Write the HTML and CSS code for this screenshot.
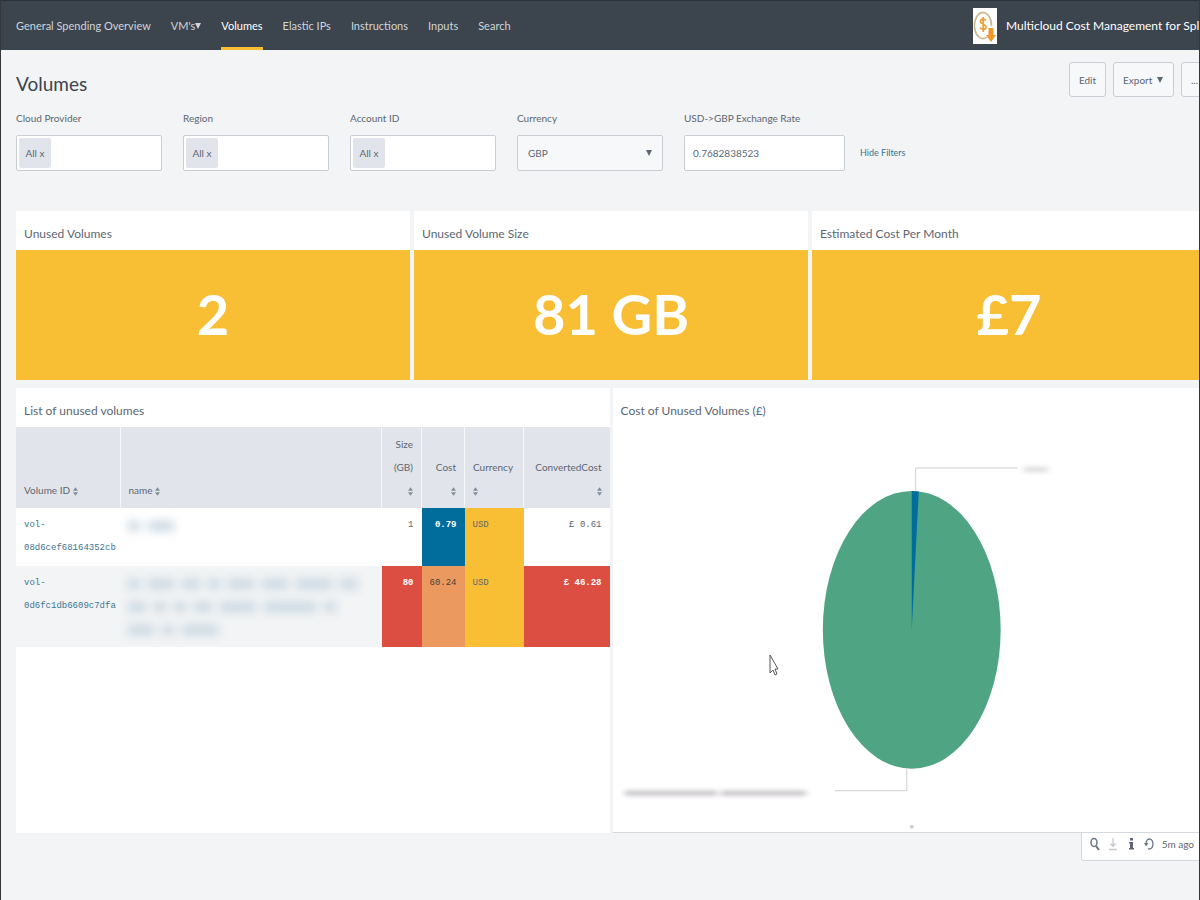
FILE: index.html
```html
<!DOCTYPE html>
<html lang="en">

<head>
    <meta charset="UTF-8">
    <meta name="viewport" content="width=device-width, initial-scale=1.0">
    <title>Volumes</title>
    <link rel="stylesheet" href="styles.css">
</head>

<body>
    <header class="app-bar">
        <nav class="app-nav">
            <a href="#">General Spending Overview</a>
            <a href="#">VM's<svg class="caret" viewBox="0 0 6 6"><path d="M0 0h6L3 6z"/></svg></a>
            <a href="#" class="active">Volumes</a>
            <a href="#">Elastic IPs</a>
            <a href="#">Instructions</a>
            <a href="#">Inputs</a>
            <a href="#">Search</a>
        </nav>
        <div class="app-brand">
            <svg class="app-logo" viewBox="0 0 24 36">
                <rect width="24" height="36" fill="#fff"/>
                <path d="M14 29A8.500 13 0 1 1 18.500 18" fill="none" stroke="#cdb48c" stroke-width="1.600"/>
                <path d="M13 12.500C12 10.500 7.500 10.500 7.500 13.500S13 16 13 19 8 22 7 19.500M10.200 9v15" fill="none" stroke="#eda13c" stroke-width="1.800"/>
                <path d="M15.500 20h5v7H23l-5 7-5-7h2.500z" fill="#f0982c"/>
            </svg>
            <span>Multicloud Cost Management for Splunk</span>
        </div>
    </header>

    <main>
        <div class="title-bar">
            <h1>Volumes</h1>
            <div class="actions">
                <button type="button">Edit</button>
                <button type="button">Export <svg class="caret" viewBox="0 0 6 6"><path d="M0 0h6L3 6z"/></svg></button>
                <button type="button">...</button>
            </div>
        </div>

        <form class="filters">
            <div class="field">
                <label for="provider">Cloud Provider</label>
                <div class="multi"><button type="button" class="tag">All x</button><input type="text" id="provider"></div>
            </div>
            <div class="field">
                <label for="region">Region</label>
                <div class="multi"><button type="button" class="tag">All x</button><input type="text" id="region"></div>
            </div>
            <div class="field">
                <label for="account">Account ID</label>
                <div class="multi"><button type="button" class="tag">All x</button><input type="text" id="account"></div>
            </div>
            <div class="field">
                <label for="currency">Currency</label>
                <div class="select-box">
                    <select id="currency">
                        <option>GBP</option>
                    </select>
                    <svg class="caret" viewBox="0 0 6 6"><path d="M0 0h6L3 6z"/></svg>
                </div>
            </div>
            <div class="field field-rate">
                <label for="rate">USD-&gt;GBP Exchange Rate</label>
                <input type="text" id="rate" class="text-box" value="0.7682838523">
            </div>
            <a href="#" class="hide-filters">Hide Filters</a>
        </form>

        <div class="row row-3">
            <section class="panel">
                <h2>Unused Volumes</h2>
                <div class="single-value">2</div>
            </section>
            <section class="panel">
                <h2>Unused Volume Size</h2>
                <div class="single-value">81 GB</div>
            </section>
            <section class="panel">
                <h2>Estimated Cost Per Month</h2>
                <div class="single-value">£7</div>
            </section>
        </div>

        <div class="row row-2">
            <section class="panel">
                <h2>List of unused volumes</h2>
                <table>
                    <colgroup>
                        <col class="col-id">
                        <col>
                        <col class="col-size">
                        <col class="col-cost">
                        <col class="col-currency">
                        <col class="col-converted">
                    </colgroup>
                    <thead>
                        <tr>
                            <th>Volume ID <svg class="sort" viewBox="0 0 6 10"><path d="M0 4l3-4 3 4zM0 6l3 4 3-4z"/></svg></th>
                            <th>name <svg class="sort" viewBox="0 0 6 10"><path d="M0 4l3-4 3 4zM0 6l3 4 3-4z"/></svg></th>
                            <th class="num">Size<br>(GB)<br><svg class="sort" viewBox="0 0 6 10"><path d="M0 4l3-4 3 4zM0 6l3 4 3-4z"/></svg></th>
                            <th class="num">Cost<br><svg class="sort" viewBox="0 0 6 10"><path d="M0 4l3-4 3 4zM0 6l3 4 3-4z"/></svg></th>
                            <th>Currency<br><svg class="sort" viewBox="0 0 6 10"><path d="M0 4l3-4 3 4zM0 6l3 4 3-4z"/></svg></th>
                            <th class="num">ConvertedCost<br><svg class="sort" viewBox="0 0 6 10"><path d="M0 4l3-4 3 4zM0 6l3 4 3-4z"/></svg></th>
                        </tr>
                    </thead>
                    <tbody>
                        <tr>
                            <td><a href="#">vol-<br>08d6cef68164352cb</a></td>
                            <td>
                                <div class="redacted"><i class="w1"></i><i class="w3"></i></div>
                            </td>
                            <td class="num">1</td>
                            <td class="num blue">0.79</td>
                            <td class="yellow">USD</td>
                            <td class="num">£ 0.61</td>
                        </tr>
                        <tr>
                            <td><a href="#">vol-<br>0d6fc1db6609c7dfa</a></td>
                            <td>
                                <div class="redacted"><i class="w1"></i><i class="w3"></i><i class="w2"></i><i class="w1"></i><i class="w3"></i><i class="w3"></i><i class="w4"></i><i class="w2"></i></div>
                                <div class="redacted"><i class="w2"></i><i class="w1"></i><i class="w1"></i><i class="w2"></i><i class="w4"></i><i class="w5"></i><i class="w1"></i></div>
                                <div class="redacted"><i class="w3"></i><i class="w1"></i><i class="w4"></i></div>
                            </td>
                            <td class="num red">80</td>
                            <td class="num orange">60.24</td>
                            <td class="yellow">USD</td>
                            <td class="num red">£ 46.28</td>
                        </tr>
                    </tbody>
                </table>
            </section>

            <div class="chart-column">
                <section class="panel panel-chart">
                    <h2>Cost of Unused Volumes (£)</h2>
                    <svg class="pie" viewBox="0 0 594 400">
                        <defs>
                            <filter id="soft" x="-20%" y="-100%" width="140%" height="300%">
                                <feGaussianBlur stdDeviation="3 2"/>
                            </filter>
                        </defs>
                        <ellipse cx="299" cy="199" rx="89" ry="139" fill="#4fa484"/>
                        <path d="M299 199V60q4 0 7 .5z" fill="#006d9c"/>
                        <path d="M303 60V37h102M294 338v22h-72" fill="none" stroke="#cfcfcf"/>
                        <g filter="url(#soft)" fill="#8d8690" opacity=".5">
                            <path d="M411 36h24v5h-24z" opacity=".6"/>
                            <path d="M12 360h92v5h-92zM108 360h85v5h-85z"/>
                        </g>
                        <circle cx="299" cy="396" r="2" fill="#d0d0d0"/>
                    </svg>
                    <svg class="pointer" viewBox="0 0 10 22"><path d="M1 1v18l3-3 2 5 2-1-2-5h3z" fill="#fff" stroke="#555"/></svg>
                </section>
                <div class="panel-tools">
                    <button type="button" aria-label="Open in search"><svg viewBox="0 0 10 14"><ellipse cx="4" cy="5.500" rx="3" ry="4" fill="none" stroke="#6b7785" stroke-width="1.500"/><path d="M6 9l3 4" stroke="#6b7785" stroke-width="2"/></svg></button>
                    <button type="button" aria-label="Export"><svg viewBox="0 0 10 14"><path d="M5 1v8M2.500 6.500L5 9.500l2.500-3M1 12.500h8" fill="none" stroke="#c5cad0" stroke-width="1.300"/></svg></button>
                    <button type="button" aria-label="Inspect"><svg viewBox="0 0 10 14"><path d="M4 1h3v2.500H4zM3 5h4v6h1v1.500H3V11h1V6.500H3z" fill="#5c6773"/></svg></button>
                    <button type="button" aria-label="Refresh"><svg viewBox="0 0 10 14"><path d="M2 7a3.500 5 0 1 1 2 4.500" fill="none" stroke="#6b7785" stroke-width="1.300"/><path d="M0 6h4.500L2 9.500z" fill="#6b7785"/></svg></button>
                    <span>5m ago</span>
                </div>
            </div>
        </div>
    </main>
</body>

</html>
```
FILE: styles.css
```css
* {
    box-sizing: border-box;
}

body {
    margin: 0;
    min-height: 100vh;
    overflow: hidden;
    border-left: 1px solid #33363b;
    border-right: 1px solid #33363b;
    background: #f2f4f5;
    color: #5c6773;
    font-family: "Lato", sans-serif;
    font-size: 10px;
}

button,
input,
select {
    font: inherit;
    color: inherit;
}

a {
    color: #3c7592;
    text-decoration: none;
}

.caret {
    width: 6px;
    height: 6px;
    fill: currentColor;
}

/* top bar */
.app-bar {
    display: flex;
    justify-content: space-between;
    height: 50px;
    background: #3c444d;
    border-top: 1px solid #2b3138;
}

.app-nav {
    display: flex;
    gap: 20px;
    padding-left: 15px;
    font-size: 11px;
}

.app-nav a {
    display: flex;
    align-items: center;
    color: #d0d5da;
    white-space: nowrap;
    border-top: 3px solid transparent;
    border-bottom: 3px solid transparent;
}

.app-nav a.active {
    color: #fff;
    border-bottom-color: #f8be34;
}

.app-brand {
    display: flex;
    align-items: center;
    gap: 9px;
    width: 226px;
    overflow: hidden;
    color: #fff;
    font-size: 12px;
    white-space: nowrap;
}

.app-logo {
    flex: none;
    width: 24px;
    height: 36px;
}

main {
    padding: 12px 0 0 15px;
}

/* title and buttons */
.title-bar {
    display: flex;
    justify-content: space-between;
    height: 44px;
}

h1 {
    margin: 8px 0 0;
    color: #3c444d;
    font-size: 19px;
    font-weight: normal;
    line-height: 28px;
}

.actions {
    display: flex;
    gap: 7px;
    margin-right: -9px;
}

.actions button {
    height: 35px;
    padding: 0 9px;
    background: #f7f8fa;
    border: 1px solid #c9ced4;
    border-radius: 3px;
    white-space: nowrap;
}

.actions .caret {
    margin: 0 1px 1px 2px;
}

/* filters */
.filters {
    display: flex;
    align-items: flex-end;
    gap: 21px;
}

.field {
    width: 146px;
}

.field-rate {
    width: 161px;
}

.field label {
    display: block;
    margin-bottom: 5px;
    line-height: 24px;
    white-space: nowrap;
}

.multi,
.select-box,
.text-box {
    display: flex;
    width: 100%;
    height: 36px;
    border: 1px solid #c9ced4;
    border-radius: 2px;
    background: #fff;
}

.multi {
    padding: 2px;
}

.tag {
    flex: none;
    width: 32px;
    padding: 0;
    border: 0;
    border-radius: 2px;
    background: #e1e5eb;
}

.multi input {
    min-width: 0;
    flex: 1;
    border: 0;
    background: none;
}

.select-box {
    position: relative;
    background: #f7f8fa;
}

.select-box select {
    width: 100%;
    padding: 0 10px;
    appearance: none;
    border: 0;
    background: none;
}

.select-box .caret {
    position: absolute;
    right: 10px;
    top: 14px;
}

.text-box {
    padding: 0 8px;
}

.hide-filters {
    margin-left: -6px;
    font-size: 9px;
    line-height: 36px;
}

/* dashboard */
.row {
    display: grid;
    margin-right: -7px;
}

.row-3 {
    grid-template-columns: repeat(3, 1fr);
    gap: 4px;
    margin-top: 40px;
}

.row-2 {
    grid-template-columns: repeat(2, 1fr);
    gap: 3px;
    margin-top: 8px;
    align-items: start;
}

.panel {
    background: #fff;
}

.row-2 .panel {
    min-height: 445px;
}

.panel h2 {
    margin: 0;
    padding: 6px 8px 0;
    height: 39px;
    font-size: 12px;
    font-weight: normal;
    line-height: 33px;
}

.single-value {
    height: 130px;
    background: #f8be34;
    color: #fff;
    font-size: 56px;
    font-weight: bold;
    line-height: 128px;
    text-align: center;
}

/* table */
table {
    width: 100%;
    table-layout: fixed;
    border-collapse: collapse;
}

.col-id {
    width: 104px;
}

.col-size {
    width: 40px;
}

.col-cost {
    width: 43px;
}

.col-currency {
    width: 59px;
}

.col-converted {
    width: 86px;
}

th,
td {
    padding: 6px 8px;
    line-height: 23px;
    text-align: left;
    vertical-align: top;
}

th {
    background: #e1e4eb;
    font-weight: normal;
    vertical-align: bottom;
    white-space: nowrap;
}

th + th {
    border-left: 1px solid #f7f8fa;
}

.sort {
    width: 5px;
    height: 9px;
    fill: #818d99;
    vertical-align: middle;
}

td {
    font-family: "Liberation Mono", monospace;
    font-size: 9px;
}

tbody tr:nth-child(2) {
    background: #f2f4f5;
}

.num {
    text-align: right;
}

.blue {
    background: #006d9c;
    color: #fff;
    font-weight: bold;
}

.yellow {
    background: #f8be34;
}

.orange {
    background: #ec9960;
    color: #4a4038;
}

.red {
    background: #dc4e41;
    color: #fff;
    font-weight: bold;
}

/* hidden names */
.redacted {
    display: flex;
    align-items: center;
    gap: 8px;
    height: 23px;
    filter: blur(5px);
}

.redacted i {
    height: 10px;
    background: #cbd8e2;
}

.w1 {
    width: 12px;
}

.w2 {
    width: 18px;
}

.w3 {
    width: 26px;
}

.w4 {
    width: 36px;
}

.w5 {
    width: 52px;
}

/* chart */
.chart-column {
    display: flex;
    flex-direction: column;
}

.panel-chart {
    position: relative;
    border-bottom: 1px solid #d5d9de;
}

.pie {
    display: block;
    width: 100%;
    margin-top: 4px;
}

.pointer {
    position: absolute;
    left: 156px;
    top: 266px;
    width: 10px;
    height: 22px;
}

.panel-tools {
    display: flex;
    align-items: center;
    align-self: flex-end;
    gap: 8px;
    height: 28px;
    padding: 0 11px 6px 8px;
    border: 1px solid #d5d9de;
    border-top: 0;
    border-radius: 0 0 3px 3px;
    background: #fff;
    white-space: nowrap;
}

.panel-tools button {
    display: flex;
    padding: 0;
    border: 0;
    background: none;
}

.panel-tools svg {
    width: 10px;
    height: 14px;
}
```
